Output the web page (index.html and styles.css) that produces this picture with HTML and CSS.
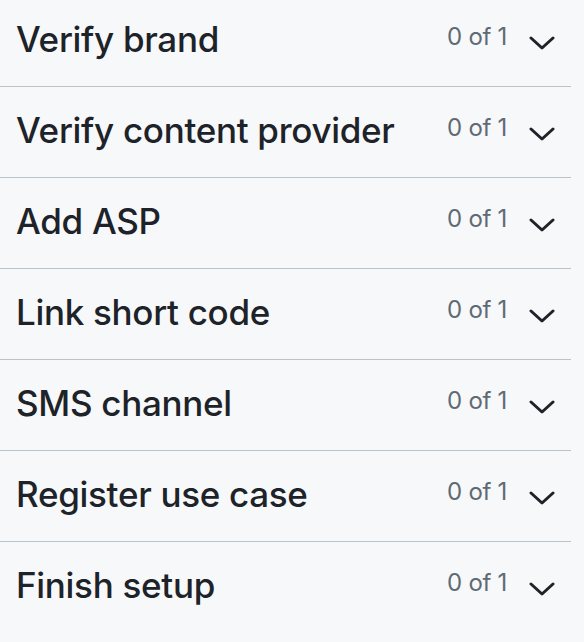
FILE: index.html
```html
<!DOCTYPE html>
<html lang="en">
<head>
<meta charset="utf-8">
<title>Setup steps</title>
<link rel="stylesheet" href="styles.css">
</head>
<body>
<ul class="steps">
  <li class="step"><span class="step-title">Verify brand</span><span class="step-count">0 of 1</span><svg class="chevron" viewBox="0 0 26 14"><path d="M2 2 L13 12 L24 2"/></svg></li>
  <li class="step"><span class="step-title">Verify content provider</span><span class="step-count">0 of 1</span><svg class="chevron" viewBox="0 0 26 14"><path d="M2 2 L13 12 L24 2"/></svg></li>
  <li class="step"><span class="step-title">Add ASP</span><span class="step-count">0 of 1</span><svg class="chevron" viewBox="0 0 26 14"><path d="M2 2 L13 12 L24 2"/></svg></li>
  <li class="step"><span class="step-title">Link short code</span><span class="step-count">0 of 1</span><svg class="chevron" viewBox="0 0 26 14"><path d="M2 2 L13 12 L24 2"/></svg></li>
  <li class="step"><span class="step-title">SMS channel</span><span class="step-count">0 of 1</span><svg class="chevron" viewBox="0 0 26 14"><path d="M2 2 L13 12 L24 2"/></svg></li>
  <li class="step"><span class="step-title">Register use case</span><span class="step-count">0 of 1</span><svg class="chevron" viewBox="0 0 26 14"><path d="M2 2 L13 12 L24 2"/></svg></li>
  <li class="step step-last"><span class="step-title">Finish setup</span><span class="step-count">0 of 1</span><svg class="chevron" viewBox="0 0 26 14"><path d="M2 2 L13 12 L24 2"/></svg></li>
</ul>
</body>
</html>
```
FILE: styles.css
```css
html, body {
  margin: 0;
  padding: 0;
  background: #f7f8fa;
}
body {
  font-family: Inter, "Noto Sans", sans-serif;
  color: #1d2329;
}
.steps {
  list-style: none;
  margin: -4px 0 0 0;
  padding: 0;
  width: 571px;
}
.step {
  display: flex;
  align-items: flex-start;
  height: 90px;
  border-bottom: 1px solid #b9c3cc;
  padding: 0 16px 0 16px;
  box-sizing: content-box;
}
.step-last {
  border-bottom: none;
}
.step-title {
  flex: 1;
  font-size: 35px;
  font-weight: 500;
  line-height: 44px;
  margin-top: 21px;
  letter-spacing: -0.3px;
}
.step-count {
  font-size: 24px;
  font-weight: 400;
  color: #5f6b74;
  line-height: 30px;
  margin-top: 26px;
  letter-spacing: -0.3px;
}
.chevron {
  width: 26px;
  height: 14px;
  margin: 40px 0 0 22px;
  fill: none;
  stroke: #1d2329;
  stroke-width: 3;
  stroke-linecap: round;
  stroke-linejoin: round;
}
```
